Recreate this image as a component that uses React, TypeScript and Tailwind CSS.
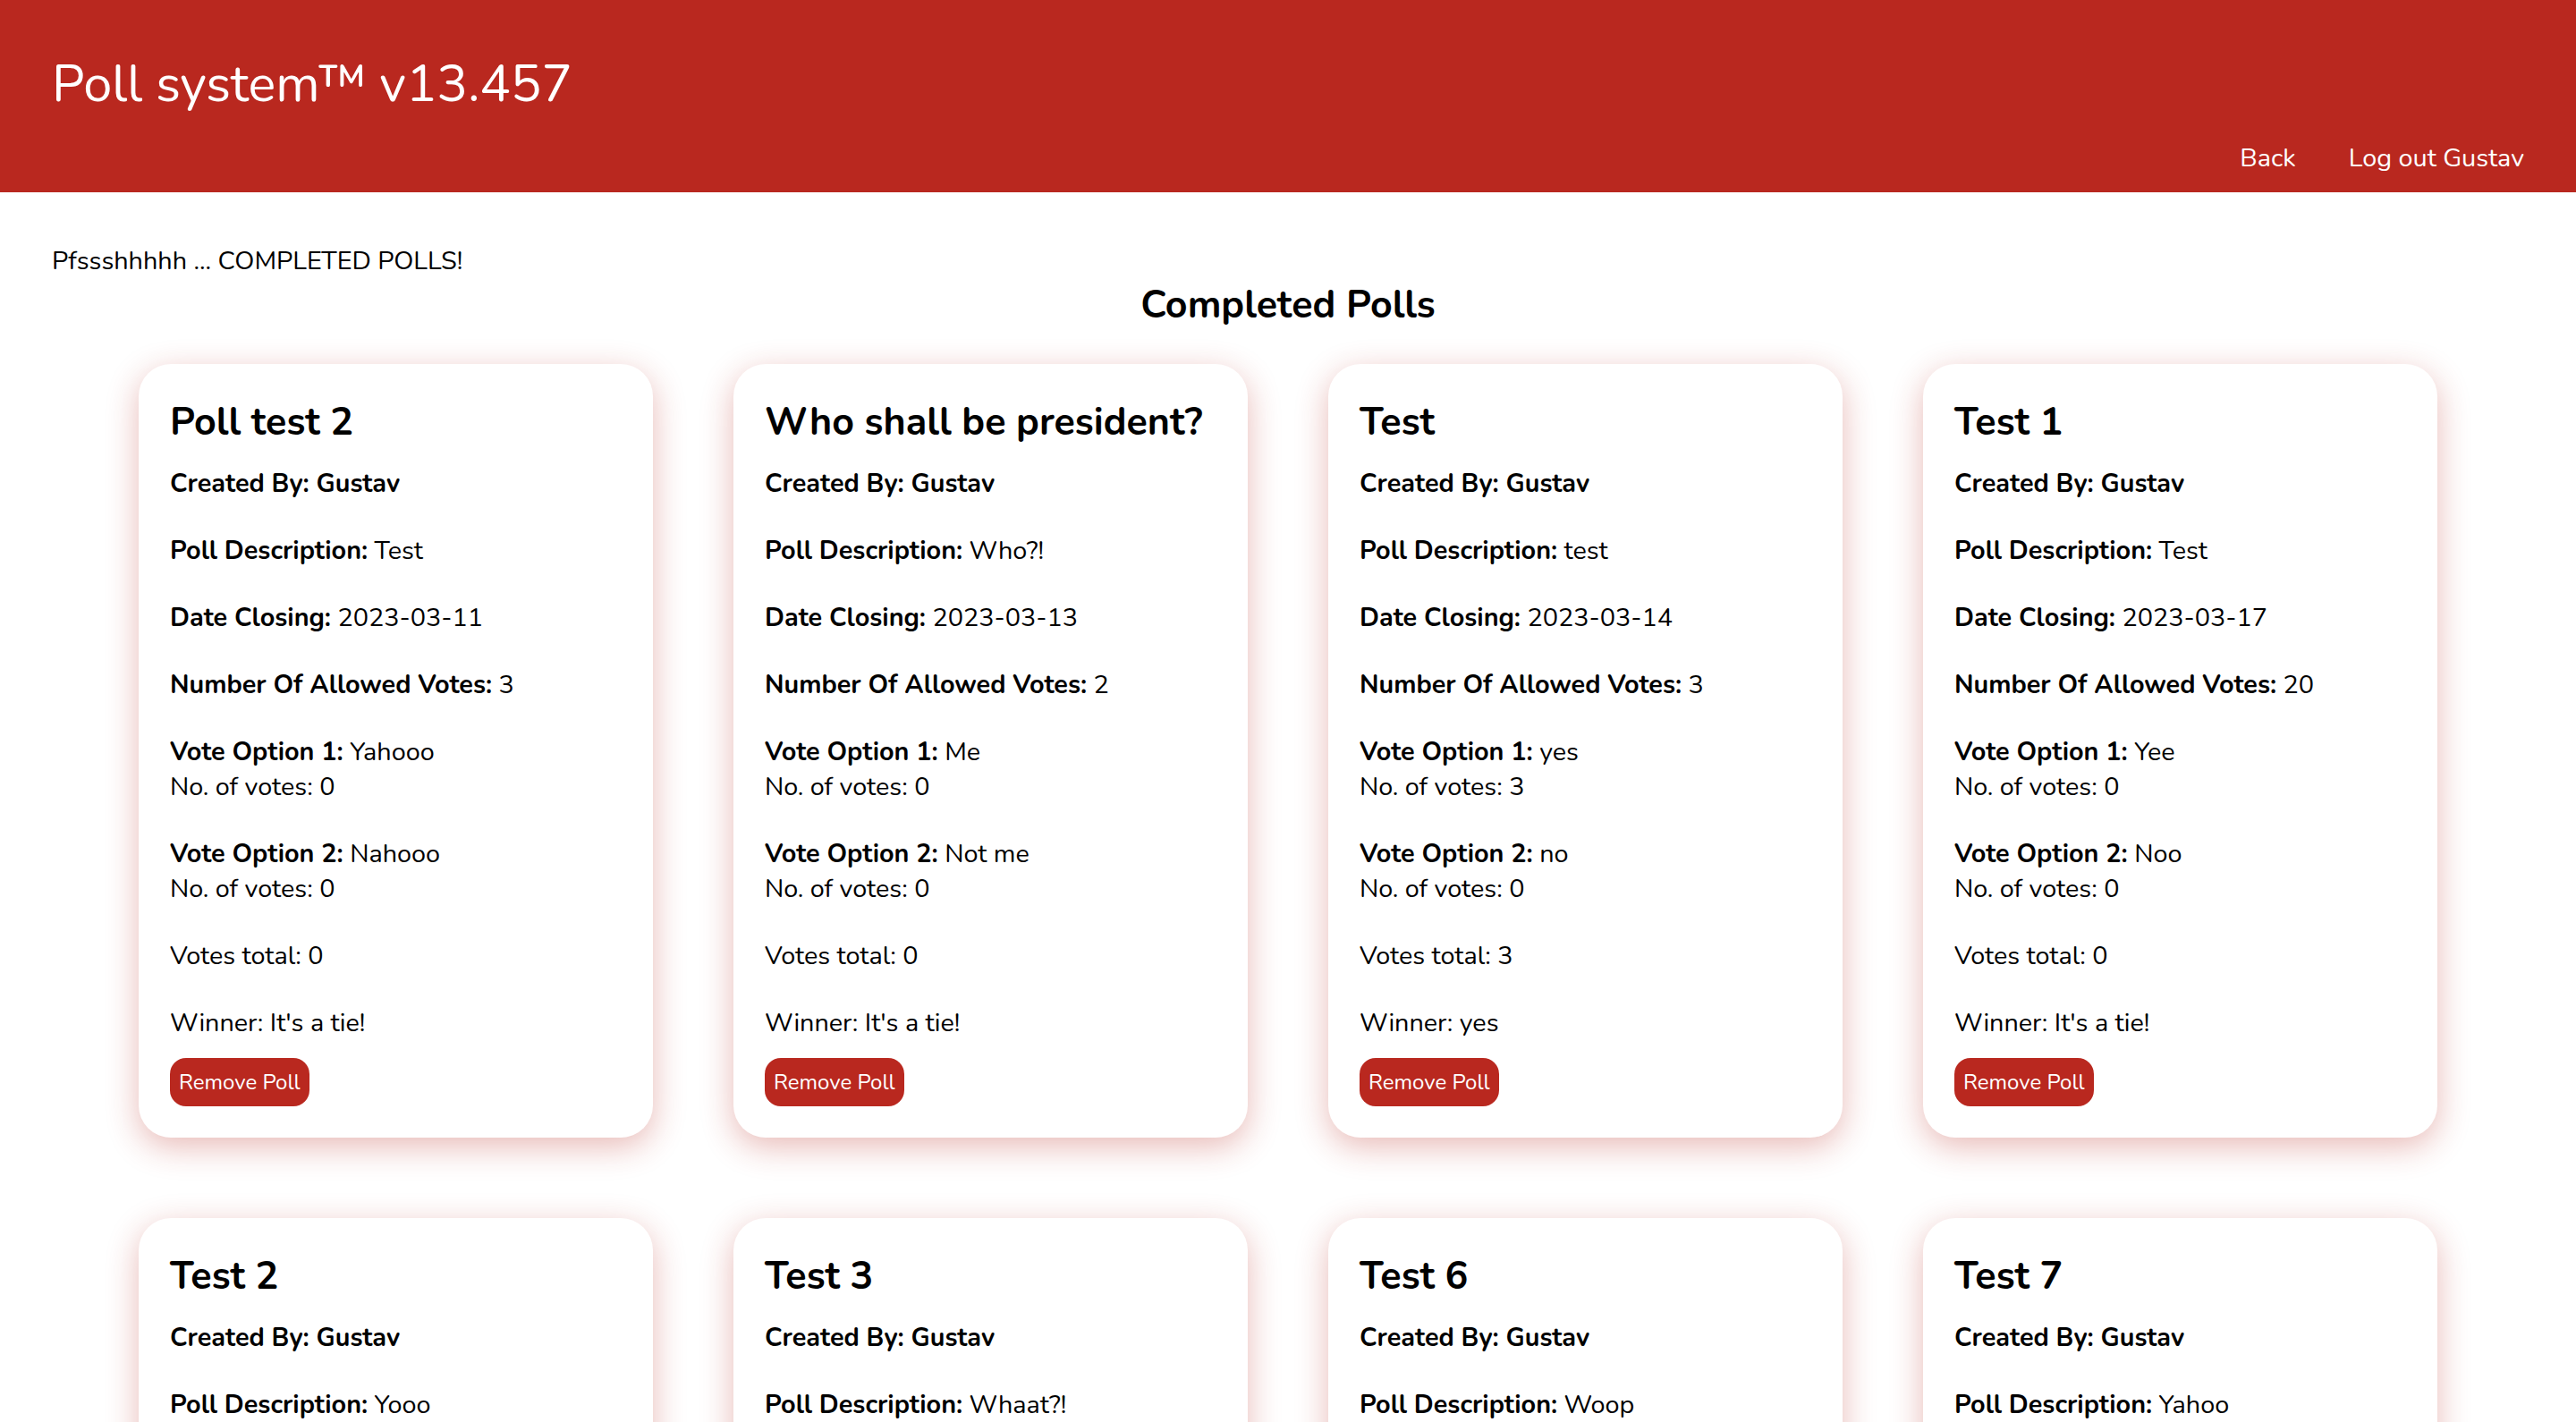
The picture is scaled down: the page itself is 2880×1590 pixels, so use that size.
import React from "react";

type Poll = {
  title: string;
  desc: string;
  date: string;
  allowed: number;
  options: { name: string; votes: number }[];
  winner: string;
};

const polls: Poll[] = [
  { title: "Poll test 2", desc: "Test", date: "2023-03-11", allowed: 3, options: [{ name: "Yahooo", votes: 0 }, { name: "Nahooo", votes: 0 }], winner: "It's a tie!" },
  { title: "Who shall be president?", desc: "Who?!", date: "2023-03-13", allowed: 2, options: [{ name: "Me", votes: 0 }, { name: "Not me", votes: 0 }], winner: "It's a tie!" },
  { title: "Test", desc: "test", date: "2023-03-14", allowed: 3, options: [{ name: "yes", votes: 3 }, { name: "no", votes: 0 }], winner: "yes" },
  { title: "Test 1", desc: "Test", date: "2023-03-17", allowed: 20, options: [{ name: "Yee", votes: 0 }, { name: "Noo", votes: 0 }], winner: "It's a tie!" },
  { title: "Test 2", desc: "Yooo", date: "2023-03-18", allowed: 2, options: [{ name: "Yes", votes: 0 }, { name: "No", votes: 0 }], winner: "It's a tie!" },
  { title: "Test 3", desc: "Whaat?!", date: "2023-03-19", allowed: 3, options: [{ name: "Yes", votes: 0 }, { name: "No", votes: 0 }], winner: "It's a tie!" },
  { title: "Test 6", desc: "Woop", date: "2023-03-20", allowed: 2, options: [{ name: "Yes", votes: 0 }, { name: "No", votes: 0 }], winner: "It's a tie!" },
  { title: "Test 7", desc: "Yahoo", date: "2023-03-21", allowed: 2, options: [{ name: "Yes", votes: 0 }, { name: "No", votes: 0 }], winner: "It's a tie!" },
];

function Card({ p }: { p: Poll }) {
  const total = p.options.reduce((a, o) => a + o.votes, 0);
  return (
    <div className="w-[575px] bg-white rounded-[36px] px-[35px] pt-[36px] pb-[35px] shadow-[0_10px_36px_rgba(184,40,32,0.32)]">
      <h2 className="text-[43px] leading-[59px] font-bold mb-[19px]">{p.title}</h2>
      <div className="flex flex-col gap-[36px] text-[28.8px] leading-[39px]">
        <p className="font-bold">Created By: Gustav</p>
        <p><span className="font-bold">Poll Description:</span> {p.desc}</p>
        <p><span className="font-bold">Date Closing:</span> {p.date}</p>
        <p><span className="font-bold">Number Of Allowed Votes:</span> {p.allowed}</p>
        {p.options.map((o, i) => (
          <div key={i}>
            <p><span className="font-bold">Vote Option {i + 1}:</span> {o.name}</p>
            <p>No. of votes: {o.votes}</p>
          </div>
        ))}
        <p>Votes total: {total}</p>
        <p>Winner: {p.winner}</p>
      </div>
      <button className="mt-[20px] h-[54px] px-[10px] rounded-[18px] bg-[#b9281f] text-white text-[24px] leading-[30px]">
        Remove Poll
      </button>
    </div>
  );
}

export default function App() {
  return (
    <div className="min-h-screen bg-white text-black" style={{ fontFamily: "Nunito, Lato, 'Noto Sans', sans-serif" }}>
      <header className="bg-[#b9281f] text-white px-[58px] pt-[55px] pb-[19px]">
        <h1 className="text-[57.6px] leading-[79px] font-normal">Poll system™ v13.457</h1>
        <nav className="mt-[23px] flex justify-end gap-[59px] text-[28.8px] leading-[39px]">
          <a>Back</a>
          <a>Log out Gustav</a>
        </nav>
      </header>
      <main className="pt-[57px] pb-[90px]">
        <p className="px-[58px] text-[28.8px] leading-[39px]">Pfssshhhhh ... COMPLETED POLLS!</p>
        <h2 className="mt-[1px] text-center text-[43px] leading-[59px] font-bold">Completed Polls</h2>
        <div className="mt-[36px] flex flex-wrap justify-center gap-[90px] px-[60px]">
          {polls.map((p, i) => (
            <Card key={i} p={p} />
          ))}
        </div>
      </main>
    </div>
  );
}
